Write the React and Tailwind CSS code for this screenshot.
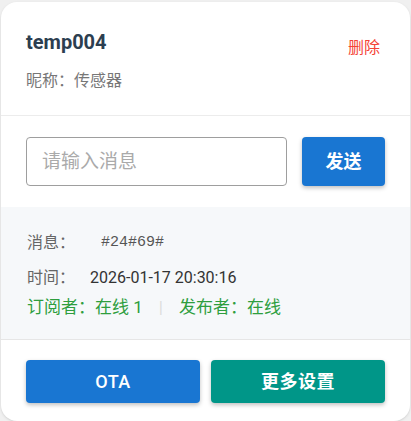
const sans = "font-['Roboto','Noto_Sans_CJK_SC',sans-serif]";

const DeviceCard = () => {
  return (
    <div className={`bg-white rounded-2xl shadow-sm overflow-hidden ${sans}`}>
      {/* Header */}
      <div className="flex justify-between items-start pl-[25px] pr-[30px] pt-[26px] pb-[22px] border-b border-[#ececec]">
        <div>
          <h2 className="text-[20px] leading-[28px] font-bold text-[#2c3e50]">temp004</h2>
          <p className="mt-[13px] text-[16px] leading-[24px] text-[#777]">昵称：传感器</p>
        </div>
        <button className="mt-[8px] text-[16px] leading-[24px] text-[#f44336]">删除</button>
      </div>

      {/* Send row */}
      <div className="flex items-center gap-[15px] px-[25px] pt-[21px] pb-[21px]">
        <input
          placeholder="请输入消息"
          className="flex-1 min-w-0 h-[49px] border border-[#9e9e9e] rounded-[4px] px-[15px] text-[19px] placeholder:text-[#aaa] outline-none"
        />
        <button className="w-[83px] h-[49px] rounded-[4px] bg-[#1976d2] text-white text-[18px] font-bold shadow-[0_2px_4px_rgba(0,0,0,0.25)]">
          发送
        </button>
      </div>

      {/* Status */}
      <div className="bg-[#f6f8fa] px-[26px] pt-[22px] pb-[17px] border-b border-[#e6e6e6]">
        <div className="flex items-center h-[28px] text-[16px] text-[#666]">
          <span>消息：</span>
          <span className="ml-[26px] font-['Liberation_Mono',monospace] text-[15px] text-[#555]">#24#69#</span>
        </div>
        <div className="flex items-center h-[28px] mt-[7px] text-[16px] text-[#666]">
          <span>时间：</span>
          <span className="ml-[15px] text-[16px] text-[#333]">2026-01-17 20:30:16</span>
        </div>
        <div className="flex items-center h-[28px] mt-[2px] text-[17px] text-[#2e9e3e]">
          <span>订阅者：在线 1</span>
          <span className="mx-[16px] text-[#ddd]">|</span>
          <span>发布者：在线</span>
        </div>
      </div>

      {/* Actions */}
      <div className="flex gap-[11px] px-[25px] pt-[20px] pb-[18px]">
        <button className="flex-1 h-[43px] rounded-[4px] bg-[#1976d2] text-white text-[18px] font-medium tracking-[0.5px] shadow-[0_2px_4px_rgba(0,0,0,0.25)]">
          OTA
        </button>
        <button className="flex-1 h-[43px] rounded-[4px] bg-[#009688] text-white text-[18px] font-bold tracking-[0.5px] shadow-[0_2px_4px_rgba(0,0,0,0.25)]">
          更多设置
        </button>
      </div>
    </div>
  );
};

export default function App() {
  return (
    <div className="min-h-screen bg-[#f0f0f0] pl-px pt-[2px] pr-px">
      <DeviceCard />
    </div>
  );
}
